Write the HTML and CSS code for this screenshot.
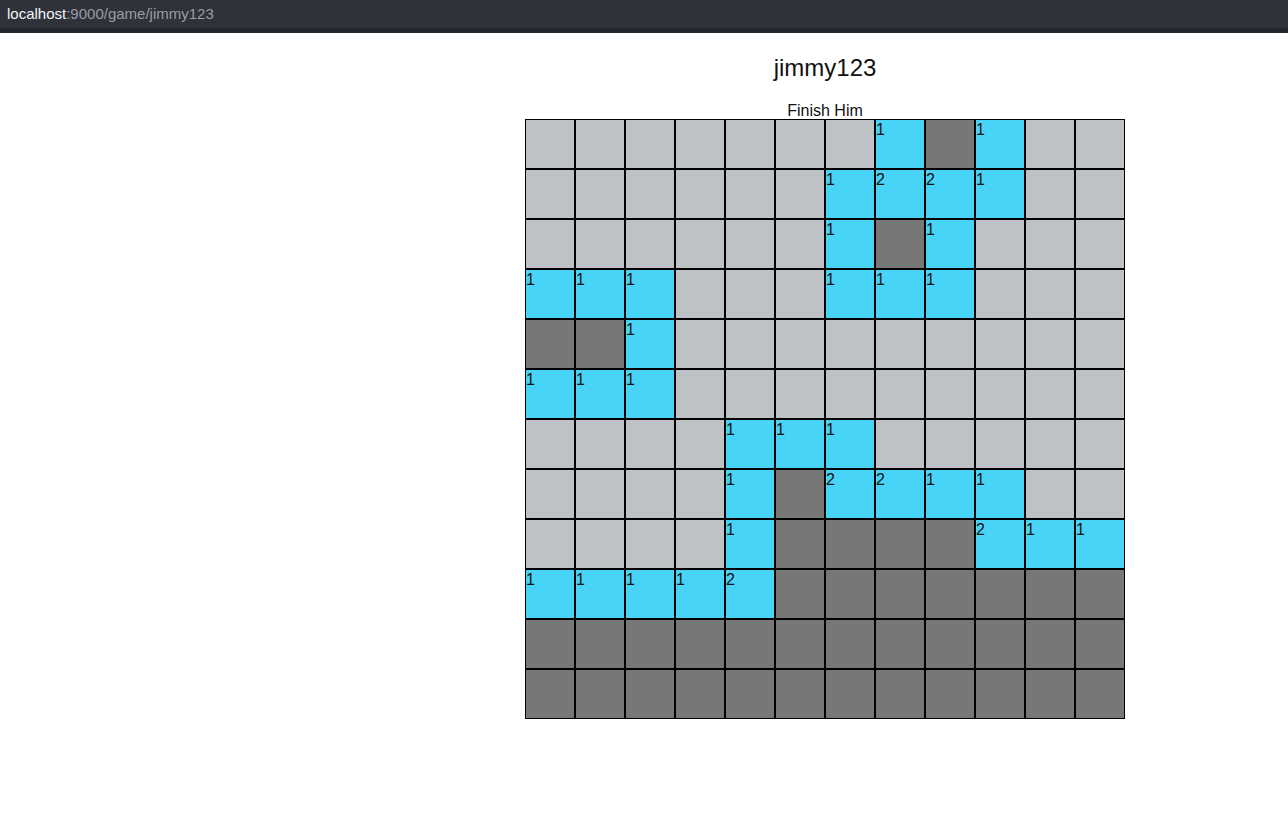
FILE: index.html
```html
<!DOCTYPE html>
<html>
<head>
<meta charset="utf-8">
<link rel="stylesheet" href="styles.css">
</head>
<body>
<div class="urlbar"><span class="host">localhost</span><span class="path">:9000/game/jimmy123</span></div>
<div class="page">
  <div class="side"></div>
  <main class="game">
    <h1 class="title">jimmy123</h1>
    <div class="status">Finish Him</div>
    <div class="board" id="board"></div>
  </main>
</div>
<script src="app.js"></script>
</body>
</html>
```
FILE: styles.css
```css
html, body {
  margin: 0;
  padding: 0;
  background: #fff;
  font-family: "Liberation Sans", Arial, sans-serif;
}
.urlbar {
  height: 28px;
  background: #2f323a;
  border-bottom: 5px solid #22252b;
  font-size: 15px;
  line-height: 28px;
  padding-left: 7px;
}
.urlbar .host { color: #f4f4f4; }
.urlbar .path { color: #9a9da3; }
.page {
  display: flex;
}
.side {
  width: 362px;
  flex: none;
}
.game {
  flex: 1;
  display: flex;
  flex-direction: column;
  align-items: center;
}
.title {
  margin: 21px 0 0;
  font-size: 24px;
  font-weight: normal;
  line-height: 28px;
  color: #111;
}
.status {
  margin-top: 19px;
  box-sizing: border-box;
  height: 18px;
  padding-top: 1px;
  font-size: 16px;
  line-height: 18px;
  color: #111;
}
.board {
  display: grid;
  grid-template-columns: repeat(12, 50px);
  grid-auto-rows: 50px;
}
.cell {
  box-sizing: border-box;
  border: 1px solid #000;
  font-size: 16px;
  line-height: 18px;
  padding-top: 1px;
  color: #111;
}
.cell.g { background: #bec1c5; }
.cell.b { background: #48d4f7; }
.cell.d { background: #777777; }
```
FILE: app.js
```js
var rows = [
  "GGGGGGG1D1GG",
  "GGGGGG1221GG",
  "GGGGGG1D1GGG",
  "111GGG111GGG",
  "DD1GGGGGGGGG",
  "111GGGGGGGGG",
  "GGGG111GGGGG",
  "GGGG1D2211GG",
  "GGGG1DDDD211",
  "11112DDDDDDD",
  "DDDDDDDDDDDD",
  "DDDDDDDDDDDD"
];
var board = document.getElementById("board");
rows.forEach(function (r) {
  for (var i = 0; i < r.length; i++) {
    var ch = r[i];
    var c = document.createElement("div");
    c.className = "cell " + (ch === "G" ? "g" : ch === "D" ? "d" : "b");
    if (ch !== "G" && ch !== "D") c.textContent = ch;
    board.appendChild(c);
  }
});
```
